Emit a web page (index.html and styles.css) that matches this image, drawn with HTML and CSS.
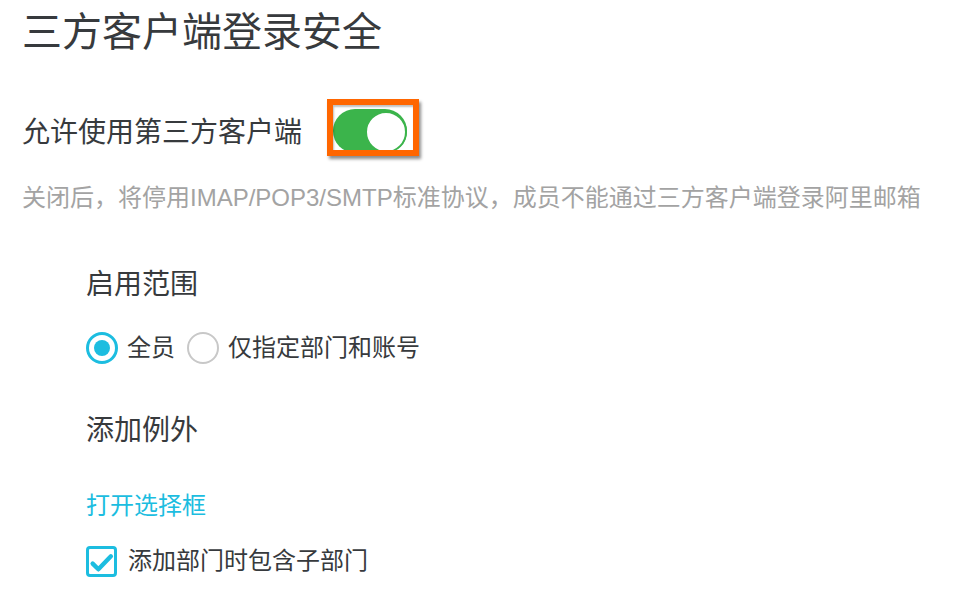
FILE: index.html
```html
<!DOCTYPE html>
<html lang="zh-CN">
<head>
<meta charset="utf-8">
<title>三方客户端登录安全</title>
<link rel="stylesheet" href="styles.css">
</head>
<body>
<div class="page">
  <h1 class="title">三方客户端登录安全</h1>
  <div class="switch-row">
    <span class="switch-label">允许使用第三方客户端</span>
    <span class="switch">
      <span class="knob"></span>
      <span class="highlight"></span>
    </span>
  </div>
  <p class="desc">关闭后，将停用IMAP/POP3/SMTP标准协议，成员不能通过三方客户端登录阿里邮箱</p>
  <div class="section">
    <div class="sub-title">启用范围</div>
    <div class="radio-row">
      <label class="radio checked"><span class="dot"></span><span class="radio-text">全员</span></label>
      <label class="radio"><span class="dot"></span><span class="radio-text">仅指定部门和账号</span></label>
    </div>
    <div class="sub-title exc">添加例外</div>
    <a class="link">打开选择框</a>
    <label class="check-row">
      <span class="box"><svg viewBox="0 0 24 24" width="25" height="25"><path d="M3.5 14l5.5 5.5L21 7" fill="none" stroke="#1cbde0" stroke-width="4.2" stroke-linecap="round" stroke-linejoin="round"/></svg></span>
      <span class="check-text">添加部门时包含子部门</span>
    </label>
  </div>
</div>
</body>
</html>
```
FILE: styles.css
```css
html, body {
  margin: 0;
  padding: 0;
  background: #ffffff;
}
body {
  font-family: "Liberation Sans", "Noto Sans CJK SC", sans-serif;
  color: #373a3d;
}
.page {
  padding: 4px 0 0 22px;
}
.title {
  margin: 0;
  font-size: 40px;
  line-height: 56px;
  font-weight: 400;
}
.switch-row {
  display: flex;
  align-items: center;
  margin-top: 49px;
  height: 44px;
}
.switch-label {
  font-size: 28px;
  line-height: 40px;
  margin-top: 4px;
}
.switch {
  position: relative;
  display: block;
  width: 74px;
  height: 44px;
  margin-left: 31px;
  border-radius: 22px;
  background: #3bb44b;
}
.knob {
  position: absolute;
  right: 0;
  top: 2px;
  width: 38px;
  height: 38px;
  border-radius: 50%;
  background: #ffffff;
  border: 2px solid #3bb44b;
}
.highlight {
  position: absolute;
  left: -6px;
  top: -10px;
  width: 80px;
  height: 45px;
  border: 6px solid #ff6600;
  box-shadow: 2px 3px 3px rgba(0, 0, 0, 0.45), inset 1px 2px 2px rgba(0, 0, 0, 0.25);
}
.desc {
  margin: 28px 0 0;
  font-size: 24px;
  line-height: 34px;
  color: #a3a3a3;
}
.section {
  margin-left: 64px;
}
.sub-title {
  margin-top: 50px;
  font-size: 28px;
  line-height: 40px;
}
.sub-title.exc {
  margin-top: 45px;
}
.radio-row {
  display: flex;
  align-items: center;
  margin-top: 25px;
  height: 36px;
}
.radio {
  display: flex;
  align-items: center;
  margin-right: 12px;
}
.dot {
  box-sizing: border-box;
  width: 32px;
  height: 32px;
  border-radius: 50%;
  border: 2px solid #c8c8c8;
  display: flex;
  align-items: center;
  justify-content: center;
}
.radio.checked .dot {
  border: 3px solid #1cbde0;
}
.radio.checked .dot::after {
  content: "";
  width: 16px;
  height: 16px;
  border-radius: 50%;
  background: #1cbde0;
}
.radio-text {
  margin-left: 9px;
  font-size: 24px;
  line-height: 34px;
}
.link {
  display: block;
  margin-top: 38px;
  font-size: 24px;
  line-height: 34px;
  color: #1cbde0;
}
.check-row {
  display: flex;
  align-items: center;
  margin-top: 21px;
  height: 34px;
}
.box {
  box-sizing: border-box;
  width: 31px;
  height: 31px;
  border: 3px solid #1cbde0;
  border-radius: 4px;
  display: flex;
  align-items: center;
  justify-content: center;
}
.check-text {
  margin-left: 11px;
  font-size: 24px;
  line-height: 34px;
}
```
